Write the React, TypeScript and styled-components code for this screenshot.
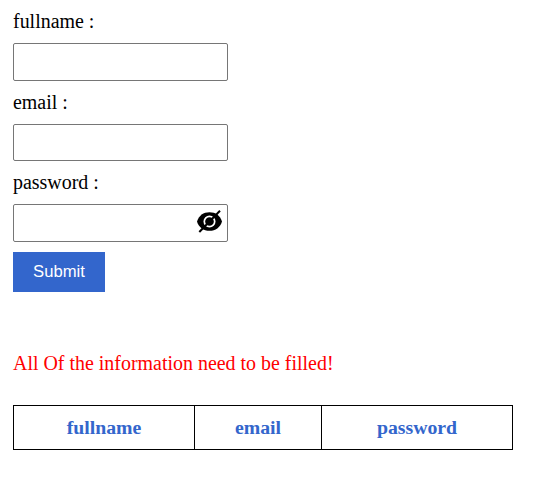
import React, { useState } from "react";
import styled, { createGlobalStyle } from "styled-components";

const GlobalStyle = createGlobalStyle`
  body {
    margin: 0;
    background: #fff;
    color: #000;
    font-family: "Liberation Serif", "Times New Roman", serif;
    font-size: 19.95px;
  }
  * { box-sizing: border-box; }
`;

const Page = styled.main`
  padding: 10px 20px 0 13px;
`;

const Form = styled.form`
  display: flex;
  flex-direction: column;
  align-items: flex-start;
`;

const Label = styled.label<{ $gap?: number }>`
  height: 23px;
  line-height: 23px;
  margin-top: ${(p) => p.$gap ?? 0}px;
  margin-bottom: 10px;
`;

const Field = styled.div<{ $height: number }>`
  position: relative;
  width: 215px;
  height: ${(p) => p.$height}px;
`;

const Input = styled.input`
  display: block;
  width: 100%;
  height: 100%;
  padding: 0 12px;
  border: 1px solid #767676;
  border-radius: 2px;
  background: #fff;
  font: 16.67px "Liberation Sans", Arial, sans-serif;
`;

const Toggle = styled.button`
  position: absolute;
  top: 4px;
  right: 5px;
  width: 27px;
  height: 27px;
  padding: 0;
  border: 0;
  background: none;
`;

const Icon = styled.svg`
  display: block;
`;

const Submit = styled.button`
  width: 92px;
  height: 40px;
  margin-top: 10px;
  padding: 0;
  border: 0;
  background: #3366cc;
  color: #fff;
  font: 16.67px "Liberation Sans", Arial, sans-serif;
`;

const Message = styled.p`
  height: 23px;
  margin: 60px 0 30px;
  line-height: 23px;
  color: #ff0000;
`;

const Table = styled.table`
  width: 500px;
  table-layout: fixed;
  border-spacing: 0;
  border: 1px solid #000;
`;

const Head = styled.th<{ $width?: number }>`
  width: ${(p) => (p.$width ? `${p.$width}px` : "auto")};
  height: 43px;
  padding: 0;
  color: #3366cc;
  font-size: 19.8px;
  line-height: 23px;
  & + & { border-left: 1px solid #000; }
`;

function HiddenEye() {
  return (
    <Icon width="27" height="27" viewBox="0 0 27 27" aria-hidden="true">
      <path d="M1 13.5C2.8 7.4 7.5 4.2 13.5 4.2S24.2 7.4 26 13.5C24.2 19.6 19.5 22.8 13.5 22.8S2.8 19.6 1 13.5Z" />
      <circle cx="13.5" cy="13.5" r="5.2" fill="none" stroke="#fff" strokeWidth="1.7" />
      <path d="M3.3 24 24 2.8" stroke="#000" strokeWidth="2" />
    </Icon>
  );
}

export default function App() {
  const [visible, setVisible] = useState(false);
  return (
    <Page>
      <GlobalStyle />
      <Form onSubmit={(e) => e.preventDefault()}>
        <Label htmlFor="fullname">fullname :</Label>
        <Field $height={38}>
          <Input id="fullname" />
        </Field>
        <Label htmlFor="email" $gap={10}>email :</Label>
        <Field $height={37}>
          <Input id="email" />
        </Field>
        <Label htmlFor="password" $gap={10}>password :</Label>
        <Field $height={38}>
          <Input id="password" type={visible ? "text" : "password"} />
          <Toggle type="button" aria-label="Toggle password" onClick={() => setVisible(!visible)}>
            <HiddenEye />
          </Toggle>
        </Field>
        <Submit type="submit">Submit</Submit>
      </Form>
      <Message>All Of the information need to be filled!</Message>
      <Table>
        <thead>
          <tr>
            <Head $width={180}>fullname</Head>
            <Head $width={127}>email</Head>
            <Head>password</Head>
          </tr>
        </thead>
      </Table>
    </Page>
  );
}
